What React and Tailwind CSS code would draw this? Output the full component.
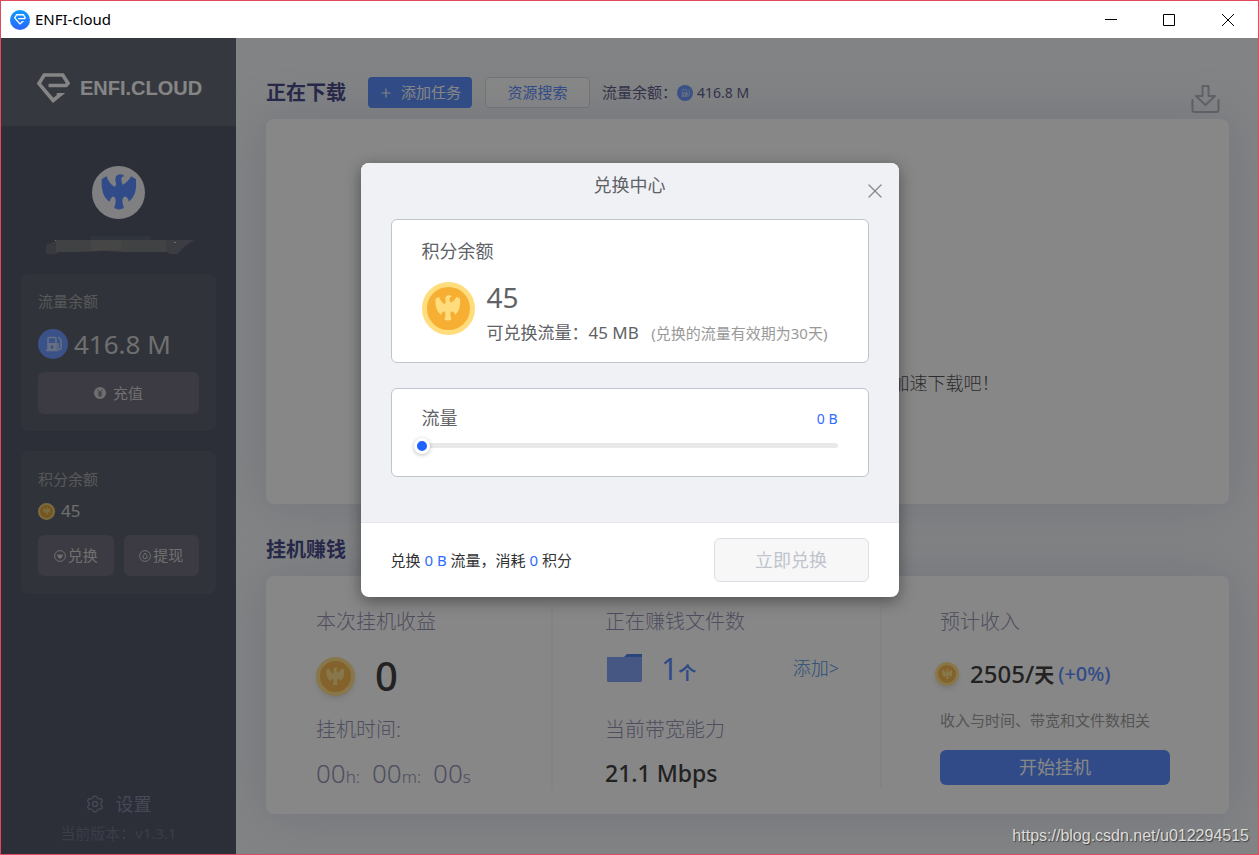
import React, { useState } from 'react';
import { X, Plus } from 'lucide-react';

const MAX_POINTS = 45;

const Eagle = ({ className }) => (
  <svg viewBox="0 0 110 112" fill="currentColor" className={className} aria-hidden="true">
    <path d="M2 16Q9 10 17 7Q25 30 41 39Q49 32 45 25Q42 14 46 7Q52 0 62 1Q68 2 72 8L66 8Q62 11 62 17Q63 25 66 33Q82 26 92 7L107 16Q109 40 104 58Q98 74 85 85Q83 71 73 69Q66 71 65 80Q66 92 70 104Q55 113 40 104Q45 92 45 80Q44 70 36 69Q30 72 26 85Q12 75 6 58Q0 38 2 16Z" />
  </svg>
);

const BrandMark = ({ className }) => (
  <svg viewBox="0 0 100 92" fill="none" stroke="currentColor" strokeWidth="11" className={className} aria-hidden="true">
    <path d="M35 38H88L94 31L78 6H22L6 32L49 83L70 66H60" />
  </svg>
);

const Coin = ({ size }) => {
  const sizes = {
    lg: 'size-[53px] border-[5px]',
    md: 'size-[39px] border-4 shadow-md opacity-85',
    sm: 'size-6 border-3 shadow-md opacity-85',
    xs: 'size-[17px] border-2 opacity-85',
  };
  return (
    <span className={`${sizes[size]} shrink-0 rounded-full border-[#ffdc7c] bg-[#f6ae33] text-[#ffdc7c] flex items-center justify-center`}>
      <Eagle className="w-3/5" />
    </span>
  );
};

const FuelBadge = ({ className }) => (
  <svg viewBox="0 0 30 30" className={className} aria-hidden="true">
    <circle cx="15" cy="15" r="15" fill="#6e9bff" />
    <g fill="none" stroke="#c3d3f8" strokeWidth="1.5">
      <path d="M10 21V9.500Q10 8.500 11 8.500H17Q18 8.500 18 9.500V21" />
      <path d="M8 21.500H20M18 15H20V19Q20 20.500 21.500 20.500T23 19V11L20.500 8" />
    </g>
    <path d="M10 14H18V21H10Z" fill="#c3d3f8" />
    <path d="M14 15.500Q16 18 15.500 19Q14 20.500 12.500 19Q12 18 14 15.500Z" fill="#6e9bff" />
  </svg>
);

const TitleBar = () => (
  <header className="h-[37px] shrink-0 bg-white flex items-center justify-between pl-[9px]">
    <div className="flex items-center gap-[5px]">
      <span className="size-5 rounded-full bg-linear-to-b from-[#0a9cff] to-[#2a62fb] text-white flex items-center justify-center">
        <BrandMark className="w-3" />
      </span>
      <span className="text-[15px] text-black">ENFI-cloud</span>
    </div>
    <div className="flex text-black">
      <button type="button" aria-label="最小化" className="w-[58px] h-9 flex items-center justify-center">
        <svg viewBox="0 0 12 12" className="size-3" aria-hidden="true"><path d="M0 5.500H12" stroke="currentColor" /></svg>
      </button>
      <button type="button" aria-label="最大化" className="w-[58px] h-9 flex items-center justify-center">
        <svg viewBox="0 0 12 12" className="size-3" aria-hidden="true"><path d="M0.500 0.500H11.500V11.500H0.500Z" fill="none" stroke="currentColor" /></svg>
      </button>
      <button type="button" aria-label="关闭" className="w-[60px] h-9 flex items-center justify-center">
        <svg viewBox="0 0 12 12" className="size-3" aria-hidden="true"><path d="M0 0L12 12M12 0L0 12" stroke="currentColor" /></svg>
      </button>
    </div>
  </header>
);

const Sidebar = () => (
  <aside className="w-[235px] shrink-0 bg-[#53596a] flex flex-col text-[15px] text-[#d2d2d2]">
    <div className="h-22 shrink-0 bg-[#666a77] flex items-center gap-[10px] pl-9 pt-3">
      <BrandMark className="w-[33px] text-[#fcfcfc]" />
      <span className="font-['Liberation_Sans_Narrow','Liberation_Sans',sans-serif] text-[20px] font-bold text-[#fcfcfc]">ENFI.CLOUD</span>
    </div>

    <div className="flex flex-col items-center pt-10">
      <span className="size-[53px] rounded-full bg-[#f2f2f5] text-[#5b8fff] flex items-center justify-center">
        <Eagle className="w-9" />
      </span>
      <svg viewBox="0 0 150 22" className="w-[150px] mt-[17px]" aria-hidden="true">
        <path d="M2 9L14 4V17Q8 20 2 17Z" fill="#6a6f78" />
        <path d="M47 0H107V6H47Z" fill="#5c6272" />
        <path d="M12 4H137V15L120 16H80L60 15L32 16H12Z" fill="#7b7d80" />
        <path d="M47 4H77V14L60 14L47 15Z" fill="#868587" />
        <path d="M122 4H150L136 14L134 18H126L122 15Z" fill="#70747f" />
        <path d="M130 6H132V7H130ZM11 4H12V5H11Z" fill="#d0d0d0" />
      </svg>
    </div>

    <section className="mx-5 mt-4 h-[157px] rounded-lg bg-[#5c626f] px-[17px] pt-[15px]">
      <h2 className="text-[#a6a6a8] leading-6">流量余额</h2>
      <div className="flex items-center gap-[6px] h-12 mt-[7px]">
        <FuelBadge className="size-[30px]" />
        <span className="text-[26px]">416.8 M</span>
      </div>
      <button type="button" className="mt-1 w-full h-[42px] rounded-md bg-[#716f7e] flex items-center justify-center gap-[7px]">
        <svg viewBox="0 0 12 12" className="size-3" aria-hidden="true">
          <circle cx="6" cy="6" r="6" fill="#d2d2d2" />
          <path d="M3.500 2.500L6 5.500L8.500 2.500M6 5.500V10M3.800 6H8.200M3.800 8H8.200" stroke="#716f7e" fill="none" />
        </svg>
        充值
      </button>
    </section>

    <section className="mx-5 mt-5 h-[143px] rounded-lg bg-[#5c626f] px-[17px] pt-4">
      <h2 className="text-[#a6a6a8] leading-6">积分余额</h2>
      <div className="flex items-center gap-[6px] h-10">
        <Coin size="xs" />
        <span className="text-[17px]">45</span>
      </div>
      <div className="grid grid-cols-2 gap-[10px] mt-1">
        <button type="button" className="h-[41px] rounded-md bg-[#716f7e] flex items-center justify-center gap-[2px]">
          <svg viewBox="0 0 12 12" className="size-3" aria-hidden="true">
            <circle cx="6" cy="6" r="5.400" fill="none" stroke="#d2d2d2" />
            <path d="M3 4L5 5L6 4L7 5L9 4Q9 7 6 9Q3 7 3 4Z" fill="#d2d2d2" />
          </svg>
          兑换
        </button>
        <button type="button" className="h-[41px] rounded-md bg-[#716f7e] flex items-center justify-center gap-[2px]">
          <svg viewBox="0 0 12 12" className="size-3" aria-hidden="true">
            <circle cx="6" cy="6" r="5.400" fill="none" stroke="#d2d2d2" />
            <path d="M6 3Q8.500 5.500 8 8Q6 9.500 4 8Q3.500 5.500 6 3Z" fill="none" stroke="#d2d2d2" />
          </svg>
          提现
        </button>
      </div>
    </section>

    <div className="mt-auto mb-[9px] text-center text-[#8689a6]">
      <button type="button" className="mx-auto mb-[3px] flex items-center gap-3 text-[18px] leading-7">
        <svg viewBox="0 0 18 18" fill="none" stroke="currentColor" strokeWidth="1.300" strokeLinejoin="round" className="size-[18px]" aria-hidden="true">
          <path d="M9 1Q11 1 11.500 3.200L13 4Q15 3.200 16 4.800T15 7.800V10.200Q17 11.600 16 13.200T13 14L11.500 14.800Q11 17 9 17T6.500 14.800L5 14Q3 14.800 2 13.200T3 10.200V7.800Q1 6.400 2 4.800T5 4L6.500 3.200Q7 1 9 1Z" />
          <circle cx="9" cy="9" r="2.500" />
        </svg>
        设置
      </button>
      <p className="leading-6 text-[15px] text-[#70758a]">当前版本：v1.3.1</p>
    </div>
  </aside>
);

const DownloadPanel = () => (
  <>
    <div className="flex items-start h-9">
      <h1 className="text-[20px] font-bold leading-8 text-[#484a8a]">正在下载</h1>
      <button type="button" className="ml-[22px] w-[104px] h-[31px] rounded bg-[#5b8fff] text-white text-[15px] flex items-center justify-center gap-2">
        <Plus size={14} strokeWidth={2} />
        添加任务
      </button>
      <button type="button" className="ml-[13px] w-[105px] h-[31px] rounded border border-[#dddddf] bg-white text-[#5b8fff] text-[15px]">
        资源搜索
      </button>
      <p className="ml-3 h-[31px] flex items-center text-[15px] text-[#5e5f8c]">
        流量余额：
        <FuelBadge className="size-4 mr-1" />
        <span className="text-[14px]">416.8 M</span>
      </p>
      <button type="button" aria-label="下载" className="ml-auto mr-[9px] self-end text-[#b4b8c0]">
        <svg viewBox="0 0 29 28" fill="none" stroke="currentColor" strokeWidth="2" strokeLinejoin="round" strokeLinecap="round" className="w-[29px]" aria-hidden="true">
          <path d="M11.500 1H17.500V11H24L14.500 20L5 11H11.500Z" />
          <path d="M1.500 15V25Q1.500 27 3.500 27H25.500Q27.500 27 27.500 25V15" />
        </svg>
      </button>
    </div>
    <section className="mt-[6px] flex-1 min-h-60 rounded-lg bg-white shadow-[0_0_50px_rgba(150,160,200,0.3)] flex items-center justify-center pt-36 text-[18px] font-light text-[#555555]">
      暂无下载任务，快来点击添加任务，享受高速通道加速下载吧！
    </section>
  </>
);

const EarnPanel = () => (
  <>
    <h2 className="mt-[30px] mb-[10px] text-[20px] leading-8 font-bold text-[#484a8a]">挂机赚钱</h2>
    <section className="rounded-lg bg-white shadow-[0_0_50px_rgba(150,160,200,0.3)] pt-[30px] pb-[26px] grid grid-cols-[287fr_329fr_347fr] text-[#9494b4]">
      <div className="pl-[50px] border-r-2 border-[#f7f7f7]">
        <h3 className="text-[20px] leading-8 font-light">本次挂机收益</h3>
        <div className="flex items-center gap-5 h-[76px]">
          <Coin size="md" />
          <span className="text-[40px] font-medium text-[#404040]">0</span>
        </div>
        <h3 className="text-[20px] leading-8 font-light">挂机时间:</h3>
        <p className="flex items-baseline mt-3 h-[30px] leading-[30px] text-[26px] font-light">
          00<small className="text-[17px] mr-3">h:</small>
          00<small className="text-[17px] mr-3">m:</small>
          00<small className="text-[17px]">s</small>
        </p>
      </div>

      <div className="pl-[52px] pr-[41px] border-r-2 border-[#f7f7f7]">
        <h3 className="text-[20px] leading-8 font-light">正在赚钱文件数</h3>
        <div className="flex items-center h-[76px] pb-4">
          <svg viewBox="0 0 40 32" className="w-10" aria-hidden="true">
            <path d="M18 6L22 2H37V10H18Z" fill="#5483f0" />
            <path d="M2 5H37V28Q37 30 36 30H3Q2 30 2 28Z" fill="#85a5fa" />
          </svg>
          <span className="ml-4 text-[30px] text-[#5b8fff]">1<b className="text-[18px]">个</b></span>
          <a href="#add" className="ml-auto text-[18px] font-light text-[#5494dd]">添加&gt;</a>
        </div>
        <h3 className="text-[20px] leading-8 font-light">当前带宽能力</h3>
        <p className="mt-3 leading-[30px] text-[23px] font-medium text-[#404040]">21.1 Mbps</p>
      </div>

      <div className="pl-[58px] pr-[59px]">
        <h3 className="text-[20px] leading-8 font-light">预计收入</h3>
        <div className="flex items-center h-18 -ml-[5px] whitespace-nowrap">
          <Coin size="sm" />
          <span className="ml-[11px] text-[24px] font-medium text-[#404040]">2505/<b className="text-[20px]">天</b></span>
          <span className="ml-1 text-[20px] font-medium text-[#5b8fff]">(+0%)</span>
        </div>
        <p className="text-[15px] leading-5 text-[#a0a0a0] whitespace-nowrap">收入与时间、带宽和文件数相关</p>
        <button type="button" className="mt-5 w-full h-[35px] rounded-md bg-[#5b8fff] text-white text-[18px]">开始挂机</button>
      </div>
    </section>
  </>
);

const ExchangeModal = ({ onClose }) => {
  const [points, setPoints] = useState(0);
  const traffic = points > 0 ? `${points} MB` : '0 B';

  return (
    <div className="absolute inset-0 bg-black/47 flex items-start justify-center pt-[125px]">
      <div role="dialog" aria-labelledby="exchange-title" className="w-[538px] rounded-lg overflow-hidden bg-white shadow-[0_4px_16px_rgba(0,0,0,0.4)]">
        <div className="bg-[#f0f1f5] px-[30px] pb-[45px] text-[#606266] border-b border-[#e4e6eb]">
          <div className="grid grid-cols-[1fr_auto_1fr] h-14">
            <h2 id="exchange-title" className="col-start-2 text-[18px] leading-6 pt-[10px]">兑换中心</h2>
            <button type="button" aria-label="关闭" onClick={onClose} className="justify-self-end self-center -mr-[18px] text-[#86888c]">
              <X size={24} strokeWidth={1.2} />
            </button>
          </div>

          <section className="h-36 rounded-md border border-[#c0c4cc] bg-white px-[30px] pt-[19px]">
            <h3 className="text-[18px] leading-6">积分余额</h3>
            <div className="flex gap-3 mt-4">
              <span className="mt-[3px]">
                <Coin size="lg" />
              </span>
              <div className="whitespace-nowrap">
                <p className="text-[28px] leading-9">45</p>
                <p className="text-[17px] leading-9">
                  可兑换流量：45 MB <span className="ml-2 text-[15px] text-[#999999]">(兑换的流量有效期为30天)</span>
                </p>
              </div>
            </div>
          </section>

          <section className="mt-[25px] h-[89px] rounded-md border border-[#c0c4cc] bg-white px-[30px] pt-[17px]">
            <div className="flex items-center justify-between">
              <label htmlFor="traffic" className="text-[18px] leading-6">流量</label>
              <span className="text-[14px] text-[#2f6bff]">{traffic}</span>
            </div>
            <input
              id="traffic"
              type="range"
              min="0"
              max={MAX_POINTS}
              value={points}
              onChange={(e) => setPoints(Number(e.target.value))}
              className="block mt-[13px] w-full h-[5px] rounded-full appearance-none bg-[#e9e9e9] outline-none [&::-webkit-slider-thumb]:appearance-none [&::-webkit-slider-thumb]:size-4 [&::-webkit-slider-thumb]:-ml-2 [&::-webkit-slider-thumb]:rounded-full [&::-webkit-slider-thumb]:border-3 [&::-webkit-slider-thumb]:border-white [&::-webkit-slider-thumb]:bg-[#1f62ff] [&::-webkit-slider-thumb]:shadow-[0_1px_4px_rgba(0,0,0,0.25)]"
            />
          </section>
        </div>

        <div className="flex items-center justify-between px-[30px] py-[15px]">
          <p className="text-[15px] text-[#303133]">
            兑换 <span className="text-[#2f6bff]">{traffic}</span> 流量，消耗 <span className="text-[#2f6bff]">{points}</span> 积分
          </p>
          <button
            type="button"
            disabled={points === 0}
            className="w-[155px] h-11 rounded-md border border-[#2f6bff] bg-[#2f6bff] text-white text-[18px] disabled:border-[#dcdfe6] disabled:bg-[#f7f7f7] disabled:text-[#c0c4cc]"
          >
            立即兑换
          </button>
        </div>
      </div>
    </div>
  );
};

const App = () => {
  const [showExchange, setShowExchange] = useState(true);

  return (
    <div className="relative h-screen min-h-[760px] flex flex-col border border-[#e2495d] font-['Noto_Sans','Noto_Sans_CJK_SC',sans-serif]">
      <TitleBar />
      <div className="relative flex-1 flex min-h-0">
        <Sidebar />
        <main className="flex-1 min-w-0 flex flex-col overflow-hidden bg-[#f5f7f9] pl-[30px] pr-[29px] pt-[39px] pb-10">
          <DownloadPanel />
          <EarnPanel />
        </main>
        {showExchange && <ExchangeModal onClose={() => setShowExchange(false)} />}
      </div>
      <span className="absolute right-[9px] bottom-[6px] font-['Liberation_Sans',sans-serif] text-[16px] text-[#dcdcdc] [text-shadow:1px_1px_1px_rgba(0,0,0,0.5)]">
        https://blog.csdn.net/u012294515
      </span>
    </div>
  );
};

export default App;
